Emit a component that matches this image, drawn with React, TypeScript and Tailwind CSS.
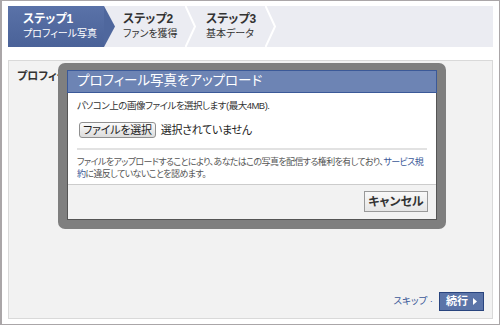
import React from 'react';

const jp = "[font-family:'Liberation_Sans','Noto_Sans_CJK_JP',sans-serif] [font-feature-settings:'palt']";

const Chevron = ({ fill }: { fill?: string }) => (
  <svg width="11" height="41" viewBox="0 0 11 41" className="shrink-0 block">
    {fill ? (
      <polygon points="0,0 11,20.5 0,41" fill={fill} />
    ) : (
      <polyline points="0.5,0 10,20.5 0.5,41" fill="none" stroke="#ffffff" strokeWidth="2" />
    )}
  </svg>
);

const App = () => {
  return (
    <div className={`w-[500px] h-[325px] bg-white border border-[#aaa6a8] border-l-2 pl-[6px] pr-[5px] pt-[5px] flex flex-col ${jp}`}>
      {/* Steps */}
      <div className="h-[41px] w-[485px] bg-[#ebecf2] flex shrink-0">
        <div className="w-[96px] bg-gradient-to-b from-[#5a72a8] to-[#4a6298] pl-[15px] pt-[6px] text-white">
          <div className="text-[12px] font-bold leading-[14px]">ステップ1</div>
          <div className="text-[10px] leading-[14px] mt-[1px]">プロフィール写真</div>
        </div>
        <Chevron fill="#4f679d" />
        <div className="w-[70px] pl-[8px] pt-[6px] text-[#333333]">
          <div className="text-[12px] font-bold leading-[14px]">ステップ2</div>
          <div className="text-[10px] leading-[14px] mt-[1px]">ファンを獲得</div>
        </div>
        <Chevron />
        <div className="w-[69px] pl-[10px] pt-[6px] text-[#333333]">
          <div className="text-[12px] font-bold leading-[14px] whitespace-nowrap">ステップ3</div>
          <div className="text-[10px] leading-[14px] mt-[1px] whitespace-nowrap">基本データ</div>
        </div>
        <Chevron />
      </div>

      {/* Panel */}
      <div className="relative mt-[13px] w-[485px] h-[259px] bg-[#f2f2f2] border border-[#d9d9d9] flex flex-col pl-[8px] pr-[8px] pb-[7px]">
        <div className="pt-[8px] text-[11px] font-bold text-[#333333] leading-[14px]">プロフィール写真</div>

        <div className="mt-auto flex items-center justify-end gap-[6px]">
          <span className="text-[9.5px] text-[#3b5998]">スキップ ·</span>
          <button className="h-[19px] px-[6px] bg-[#5b74a8] border border-[#29447e] text-white text-[11px] font-bold flex items-center gap-[5px]">
            続行
            <svg width="4" height="7" viewBox="0 0 4 7"><polygon points="0,0 4,3.5 0,7" fill="#ffffff" /></svg>
          </button>
        </div>

        {/* Dialog */}
        <div className="absolute left-[49px] top-[2px] w-[388px] bg-[#7f7f7f] rounded-[7px] pt-[7px] px-[9px] pb-[9px]">
          <div className="bg-white border border-[#555555]">
            <div className="h-[23px] bg-[#6d84b4] border border-[#3b5998] -m-px flex items-center pl-[9px] text-white text-[13.5px]">
              プロフィール写真をアップロード
            </div>
            <div className="px-[9px] pt-[8px] pb-[4px]">
              <div className="text-[9.5px] tracking-[-0.5px] text-[#333333] leading-[12px]">パソコン上の画像ファイルを選択します(最大4MB).</div>
              <div className="mt-[10px] flex items-center gap-[5px] pl-[2px]">
                <button className="h-[16px] px-[3px] rounded-[3px] border border-[#8f8f8f] bg-gradient-to-b from-[#fbfbfb] to-[#dcdcdc] text-[11px] tracking-[-0.2px] text-[#222222] leading-none flex items-center">
                  ファイルを選択
                </button>
                <span className="text-[11px] tracking-[-0.3px] text-[#222222]">選択されていません</span>
              </div>
              <div className="mt-[9px] h-[2px] bg-[#e2e2e2]" />
              <p className="mt-[6px] text-[9px] tracking-[-0.6px] leading-[12px] text-[#555555]">
                ファイルをアップロードすることにより、あなたはこの写真を配信する権利を有しており、<span className="text-[#3b5998]">サービス規約</span>に違反していないことを認めます。
              </p>
            </div>
            <div className="h-[35px] bg-[#f2f2f2] border-t border-[#cccccc] flex items-center justify-end pr-[8px]">
              <button className="h-[21px] w-[64px] border border-[#999999] bg-gradient-to-b from-[#f8f8f8] to-[#e6e6e6] text-[12px] font-bold text-[#333333] flex items-center justify-center">
                キャンセル
              </button>
            </div>
          </div>
        </div>
      </div>
    </div>
  );
};

export default App;
